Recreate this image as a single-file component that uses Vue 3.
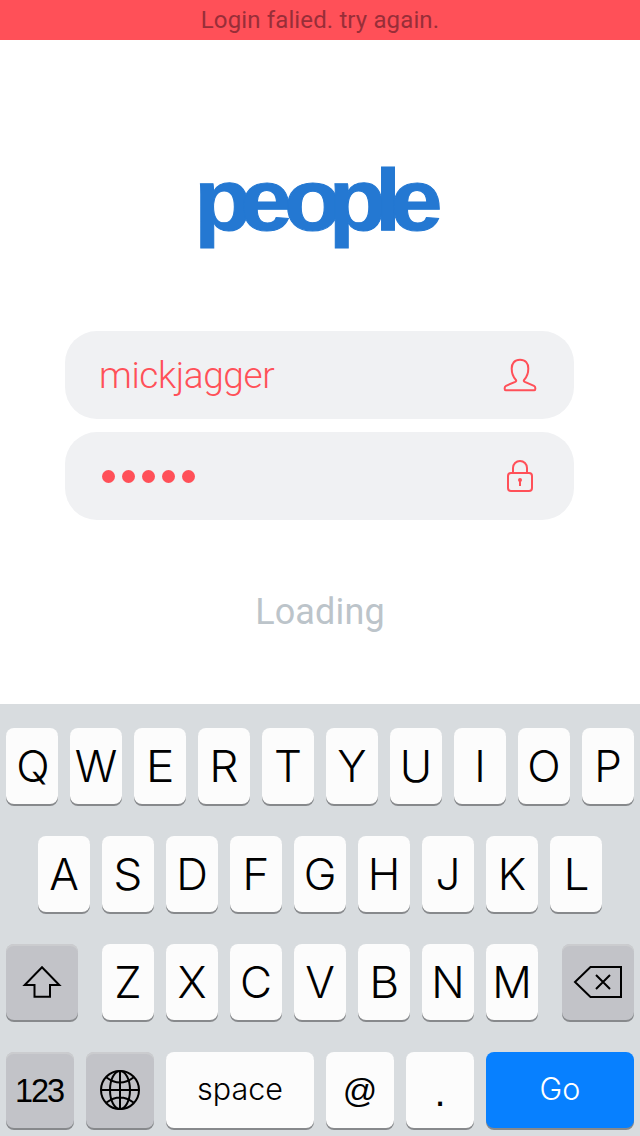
<script setup>
const rows = [
  [...'QWERTYUIOP'],
  [...'ASDFGHJKL'],
]
const third = [...'ZXCVBNM']
</script>

<template>
  <main class="screen">
    <div class="alert"><span>Login falied. try again.</span></div>
    <section class="login">
      <svg class="logo" width="280" height="130" viewBox="180 140 280 130" aria-label="people">
        <text y="230.500" x="179.900 222.300 263 304.500 347.300 361.400" transform="scale(1.08 1)">people</text>
      </svg>
      <div class="field">
        <span class="name">mickjagger</span>
        <svg class="icon" width="40" height="40" viewBox="0 0 40 40">
          <path d="M20 4.800c-5.500 0-8.300 3.700-8.300 8.700 0 4.500 1.200 8 3.900 11 1 1 .8 1.700-.4 2.300L6 30.800c-1 .5-1.300 1.200-1.300 2.200v1c0 .7.400 1.200 1 1.200h28.600c.6 0 1-.5 1-1.200v-1c0-1-.3-1.700-1.300-2.200l-9.200-4c-1.200-.6-1.400-1.300-.4-2.300 2.700-3 3.900-6.500 3.900-11 0-5-2.800-8.700-8.300-8.700z" />
        </svg>
      </div>
      <div class="field">
        <span class="dots"><i v-for="n in 5" :key="n" /></span>
        <svg class="icon" width="40" height="40" viewBox="0 0 40 40">
          <rect x="8" y="17" width="24" height="18" rx="3" />
          <path d="M13 17v-5a7 7 0 0 1 14 0v5" />
          <circle class="hole" cx="20" cy="24" r="2" />
          <path d="M20 24v6" />
        </svg>
      </div>
      <div class="loading">Loading</div>
    </section>
    <section class="keyboard">
      <div v-for="(row, i) in rows" :key="i" class="row">
        <div v-for="k in row" :key="k" class="key"><span :class="'g-' + k">{{ k }}</span></div>
      </div>
      <div class="row spread">
        <div class="key dark wide">
          <svg width="72" height="76" viewBox="0 0 72 76"><path d="M36 23.200 18.700 41H28.500v11.800h15.500V41h9.300z" /></svg>
        </div>
        <div class="row">
          <div v-for="k in third" :key="k" class="key"><span :class="'g-' + k">{{ k }}</span></div>
        </div>
        <div class="key dark wide">
          <svg width="72" height="76" viewBox="0 0 72 76"><path d="M28.500 23H59v30H28.500L13 38zM34 31l14 14M48 31 34 45" /></svg>
        </div>
      </div>
      <div class="row">
        <div class="key dark mid"><span class="num">123</span></div>
        <div class="key dark mid">
          <svg width="68" height="76" viewBox="0 0 68 76">
            <circle cx="34" cy="38" r="19" />
            <ellipse cx="34" cy="38" rx="10" ry="19" />
            <path d="M34 19v38M15 38h38M20.500 25.500q13.500 10 27 0M20.500 50.500q13.500-10 27 0" />
          </svg>
        </div>
        <div class="key long"><span class="space">space</span></div>
        <div class="key mid"><span class="at">@</span></div>
        <div class="key mid"><span class="dot">.</span></div>
        <div class="key long go"><span class="gotext">Go</span></div>
      </div>
    </section>
  </main>
</template>

<style>
body { margin: 0; background: #fff; }
</style>

<style scoped>
.screen { width: 640px; height: 1136px; overflow: hidden; display: flex; flex-direction: column; background: #fff; font-family: Roboto, sans-serif; }
.alert { height: 40px; background: #ff5058; color: #982e38; font-size: 24px; line-height: 40px; text-align: center; letter-spacing: .13px; flex: none; }
.login { height: 664px; flex: none; display: flex; flex-direction: column; align-items: center; }
.logo { margin: 100px 0 61px; display: block; flex: none; }
.logo text { font: bold 87px "Liberation Sans", sans-serif; fill: #2478d2; stroke: #2478d2; stroke-width: 1; }
.field { box-sizing: border-box; width: 509px; height: 88px; margin: 0 1px 13px 0; padding: 0 34px; border-radius: 32px; background: #f0f1f3; color: #ff5058; display: flex; align-items: center; justify-content: space-between; flex: none; }
.name { font-size: 37px; font-weight: 300; line-height: 86px; padding-top: 2px; letter-spacing: -.4px; }
.icon { fill: none; stroke: #ff5058; stroke-width: 2; }
.hole { fill: #ff5058; stroke: none; }
.dots { display: flex; gap: 7px; padding: 0 0 0 3px; }
.dots i { width: 13px; height: 13px; border-radius: 50%; background: #ff5058; }
.loading { margin-top: 56px; font-size: 36px; line-height: 46px; letter-spacing: .15px; color: #bcc4ca; }
.keyboard { height: 432px; flex: none; padding: 24px 6px 0; display: flex; flex-direction: column; gap: 32px; background: #d8dcdf; box-sizing: border-box; color: #000; font-family: Inter, sans-serif; font-weight: 300; }
.row { display: flex; justify-content: center; gap: 12px; }
.spread { justify-content: space-between; }
.key { width: 52px; height: 76px; border-radius: 8px; background: #fcfcfc; box-shadow: 0 2px 0 #87898c; display: flex; align-items: center; justify-content: center; font-size: 44px; line-height: 76px; flex: none; }
.key span { display: block; }
.g-Q { transform: translateX(1px); }
.g-E { transform: scaleX(1.1); }
.g-R, .g-F, .g-S, .g-B, .g-L { transform: scaleX(1.05); }
.wide { width: 72px; }
.mid { width: 68px; }
.long { width: 148px; }
.dark { background: #c2c3c8; box-shadow: 0 2px 0 #87898c, inset 0 2px 0 #cbcccf; }
.go { background: #0780ff; color: #fff; }
.key svg { fill: none; stroke: #000; stroke-width: 2; }
.key .num { font: 32.500px/76px "Liberation Sans", sans-serif; letter-spacing: -2px; padding: 2px 2px 0 0; }
.space, .gotext { font-size: 30.500px; padding-bottom: 3px; }
.key .at { font: 34px/76px "Liberation Sans", sans-serif; }
.key .dot { font: 40px/76px "Liberation Sans", sans-serif; padding-top: 3px; }
</style>
